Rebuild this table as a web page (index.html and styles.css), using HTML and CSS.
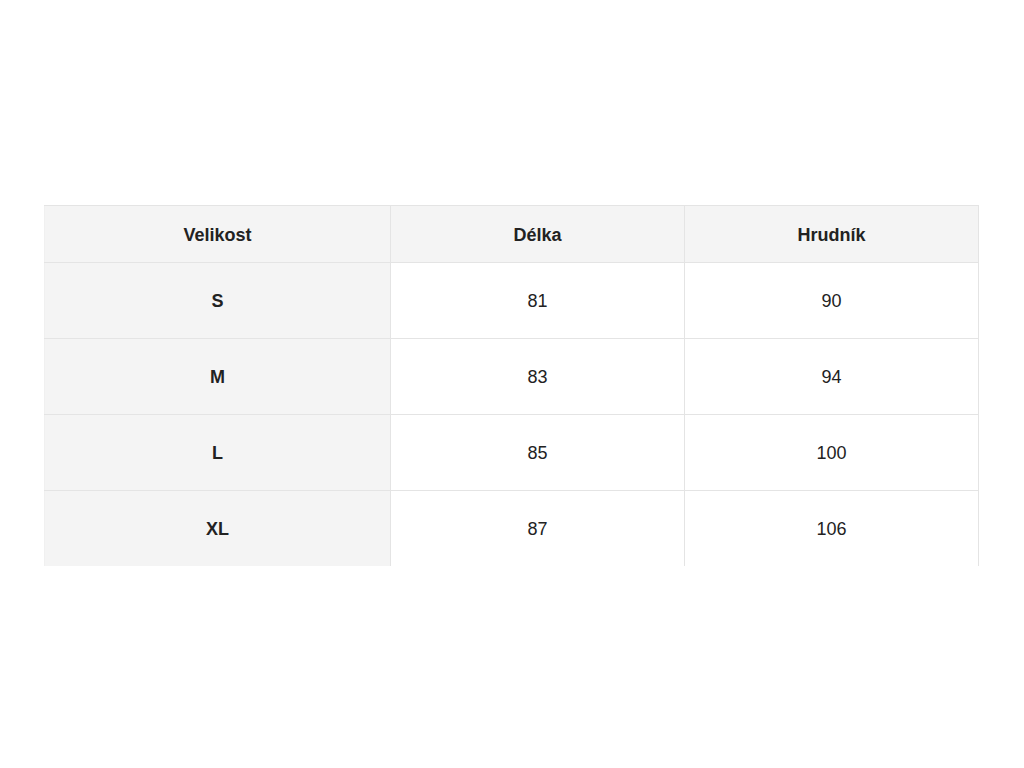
FILE: index.html
```html
<!DOCTYPE html>
<html lang="cs">
<head>
<meta charset="utf-8">
<link rel="stylesheet" href="styles.css">
</head>
<body>
<main class="page">
  <table class="sizes">
    <colgroup>
      <col class="c1"><col class="c2"><col class="c3">
    </colgroup>
    <thead>
      <tr><th>Velikost</th><th>Délka</th><th>Hrudník</th></tr>
    </thead>
    <tbody>
      <tr><th>S</th><td>81</td><td>90</td></tr>
      <tr><th>M</th><td>83</td><td>94</td></tr>
      <tr><th>L</th><td>85</td><td>100</td></tr>
      <tr><th>XL</th><td>87</td><td>106</td></tr>
    </tbody>
  </table>
</main>
</body>
</html>
```

FILE: styles.css
```css
html, body {
  margin: 0;
  padding: 0;
  background: #fff;
}
.page {
  height: 768px;
  display: flex;
  align-items: center;
  justify-content: flex-start;
  padding: 0 46px 0 44px;
  box-sizing: border-box;
}
.sizes {
  width: 934px;
  border-collapse: collapse;
  table-layout: fixed;
  font-family: "Liberation Sans", Arial, sans-serif;
  font-size: 18px;
  color: #222;
  margin-top: 2px;
}
.c1 { width: 346px; }
.c2 { width: 294px; }
.c3 { width: 294px; }
.sizes th, .sizes td {
  text-align: center;
  border: 1px solid #e4e4e4;
  padding: 0;
}
.sizes thead th {
  background: #f4f4f4;
  font-weight: bold;
  height: 52px;
  padding-top: 4px;
}
.sizes tbody th {
  background: #f4f4f4;
  font-weight: bold;
  border-left-color: #f0f0f0;
}
.sizes tbody td, .sizes tbody th {
  height: 73px;
  padding-top: 2px;
}
.sizes thead th:first-child {
  border-left-color: #f0f0f0;
}
.sizes tbody tr:last-child th,
.sizes tbody tr:last-child td {
  border-bottom: none;
}
```
